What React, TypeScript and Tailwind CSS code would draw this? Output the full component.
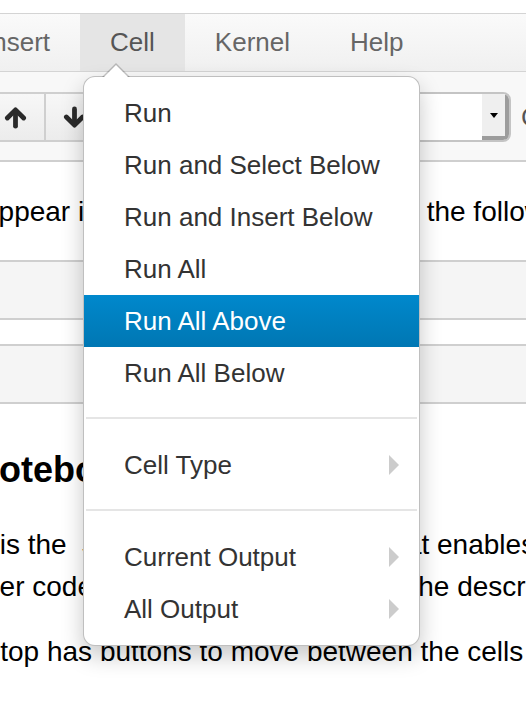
type MenuEntry =
  | { kind: "item"; label: string; active?: boolean; submenu?: boolean }
  | { kind: "divider" };

const cellMenu: MenuEntry[] = [
  { kind: "item", label: "Run" },
  { kind: "item", label: "Run and Select Below" },
  { kind: "item", label: "Run and Insert Below" },
  { kind: "item", label: "Run All" },
  { kind: "item", label: "Run All Above", active: true },
  { kind: "item", label: "Run All Below" },
  { kind: "divider" },
  { kind: "item", label: "Cell Type", submenu: true },
  { kind: "divider" },
  { kind: "item", label: "Current Output", submenu: true },
  { kind: "item", label: "All Output", submenu: true },
];

function Arrow({ down = false }: { down?: boolean }) {
  return (
    <svg
      viewBox="0 0 24 24"
      className={down ? "size-[23px] rotate-180" : "size-[23px]"}
      fill="none"
      stroke="#2b2b2b"
      strokeWidth={5}
      strokeLinecap="round"
      strokeLinejoin="round"
    >
      <path d="M3.5 12.5 12 4l8.5 8.5" />
      <path d="M12 5v16" />
    </svg>
  );
}

function ToolbarButton({ children }: { children: React.ReactNode }) {
  return (
    <div className="flex h-full w-[58px] shrink-0 items-center justify-center bg-gradient-to-b from-[#f7f7f7] to-[#ececec] [&:not(:first-child)]:border-l-2 [&:not(:first-child)]:border-[#cfcfcf]">
      {children}
    </div>
  );
}

function CellDropdown() {
  return (
    <div className="absolute left-[83px] top-[76px] w-[337px] whitespace-nowrap rounded-[12px] border border-black/25 bg-white py-[10px] shadow-[0_10px_22px_rgba(0,0,0,0.22)]">
      {/* caret pointing up at the Cell tab */}
      <span className="absolute -top-[14px] left-[18px] h-0 w-0 border-x-[14px] border-b-[14px] border-x-transparent border-b-black/20" />
      <span className="absolute -top-[12px] left-[20px] h-0 w-0 border-x-[12px] border-b-[12px] border-x-transparent border-b-white" />

      {cellMenu.map((entry, i) =>
        entry.kind === "divider" ? (
          <div key={i} className="mx-[2px] my-[18px] box-content h-[2px] border-b-2 border-white bg-[#e5e5e5]" />
        ) : (
          <div
            key={i}
            className={
              entry.active
                ? "relative h-[52px] bg-gradient-to-b from-[#0088cc] to-[#0077b3] px-[40px] text-[26px] leading-[52px] text-white"
                : "relative h-[52px] px-[40px] text-[26px] leading-[52px] text-[#333]"
            }
          >
            {entry.label}
            {entry.submenu && (
              <span className="absolute right-[20px] top-[16px] h-0 w-0 border-y-[10px] border-l-[10px] border-y-transparent border-l-[#cccccc]" />
            )}
          </div>
        )
      )}
    </div>
  );
}

export default function App() {
  return (
    <div className="relative h-[708px] w-[526px] overflow-hidden bg-white font-['Liberation_Sans',Arial,sans-serif] text-black">
      <div className="h-[13px]" />

      {/* menubar */}
      <nav className="flex h-[59px] whitespace-nowrap border-y border-[#d4d4d4] bg-gradient-to-b from-[#fafafa] to-[#f0f0f0] text-[26px] leading-[57px] text-[#666]">
        <div className="-ml-[45px] shrink-0 px-[30px]">Insert</div>
        <div className="shrink-0 bg-[#e5e5e5] px-[30px] text-[#555]">Cell</div>
        <div className="shrink-0 px-[30px]">Kernel</div>
        <div className="shrink-0 px-[30px]">Help</div>
      </nav>

      {/* toolbar */}
      <div className="flex h-[90px] items-start overflow-hidden whitespace-nowrap border-b-2 border-[#cfcfcf] bg-[#f8f8f8] pt-[20px]">
        <div className="-ml-[16px] flex h-[50px] shrink-0 overflow-hidden rounded-[8px] border-2 border-[#cfcfcf]">
          <ToolbarButton>
            <Arrow />
          </ToolbarButton>
          <ToolbarButton>
            <Arrow down />
          </ToolbarButton>
        </div>
        <div className="ml-[237px] flex h-[50px] w-[170px] shrink-0 overflow-hidden rounded-[8px] border-2 border-[#c4c4c4] bg-white">
          <div className="flex-1" />
          <div className="flex w-[27px] items-center justify-center border-b-4 border-r-4 border-[#9c9c9c] bg-[#efefef]">
            <span className="h-0 w-0 border-x-[4px] border-t-[5px] border-x-transparent border-t-black" />
          </div>
        </div>
        <div className="ml-[10px] shrink-0 text-[26px] leading-[50px] text-[#555]">CellToolbar</div>
      </div>

      {/* notebook content */}
      <div className="h-[98px] whitespace-nowrap pt-[30px] text-[28px] leading-[40px]">
        <p className="-ml-[17px]">appear in the menubar and toolbar, the following ones are</p>
      </div>
      <div className="h-[58px] border-t-2 border-[#cfcfcf] bg-[#f5f5f5]" />
      <div className="h-[26px] border-t-2 border-[#cfcfcf] bg-white" />
      <div className="h-[58px] border-t-2 border-[#cfcfcf] bg-[#f5f5f5]" />
      <div className="h-[2px] bg-[#cfcfcf]" />

      <div className="whitespace-nowrap pt-[46px]">
        <h3 className="-ml-[27px] text-[36px] font-bold leading-[40px]">Notebook Editor</h3>
        <div className="mt-[34px] text-[28px] leading-[42px]">
          <p className="-ml-[61px]">This is the{"\u00a0"} Jupyter web application that enables</p>
          <p className="-ml-[30px]">user code and rich markdown. See the description</p>
        </div>
        <p className="-ml-[227px] mt-[23px] text-[28px] leading-[42px]">
          The toolbar at the top has buttons to move between the cells
        </p>
      </div>

      <CellDropdown />
    </div>
  );
}
